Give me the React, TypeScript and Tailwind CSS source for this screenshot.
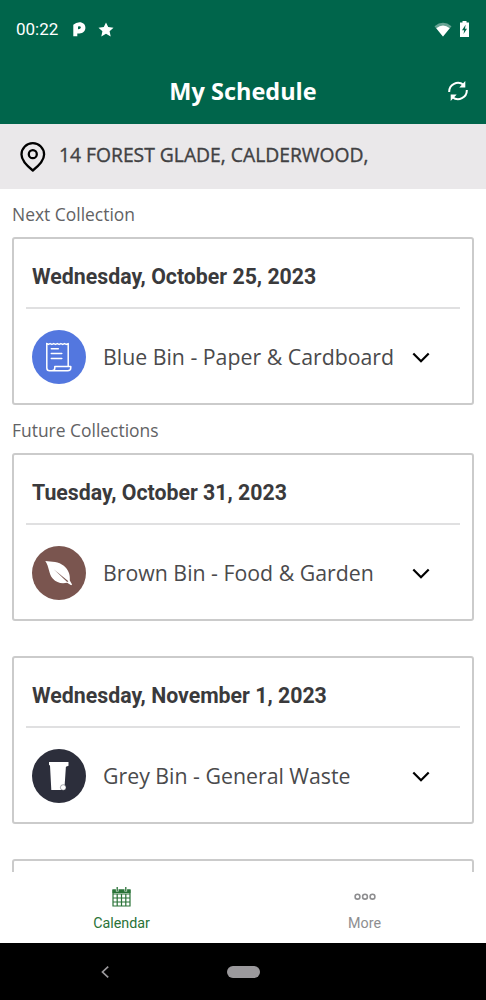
import React from 'react';

const openSans = "font-['Open_Sans','Noto_Sans',sans-serif]";
const roboto = "font-['Roboto',sans-serif]";

const PaperIcon: React.FC = () => (
  <svg className="size-[54px]" viewBox="0 0 54 54" fill="none" stroke="white" strokeWidth="1.500" strokeLinejoin="round" strokeLinecap="round">
    <path d="M14.800 13.600V38q0 2.800 2.800 2.800h18q3.200 0 3.200-3v-1.300H22.800V38q0 2.800-3 2.800" />
    <path d="M14.800 13.600l1.500.8 1.800-.8 1.800.8 1.800-.8 1.800.8 1.800-.8 1.800.8 1.800-.8 1.800.8 1.800-.8 1.800.8 1.900-.8v22.500" />
    <path d="M19.300 18.800h7M19.300 23.600h10.500M19.300 28.400h10.500" />
  </svg>
);

const LeafIcon: React.FC = () => (
  <svg className="size-[54px]" viewBox="0 0 54 54">
    <path d="M13.300 15c6.500.6 13.500.6 18.500 4.800 4.500 3.900 6.500 8.200 6 14.700l2.300 3.900-1 .9-3.900-2.500c-6 .9-10.500.2-14.500-4.300-4-4.600-3.400-11.500-7.400-17.500z" fill="white" />
    <path d="M22 23.500l13.200 12.500 1.200-.8z" fill="#7a554f" />
  </svg>
);

const BinIcon: React.FC = () => (
  <svg className="size-[54px]" viewBox="0 0 54 54">
    <path d="M17 13h19.500v3.800l-2.600.9-1.300 19.600v3.700H19.300L18 16.400l-1-.4z" fill="white" />
    <circle cx="31.200" cy="38.500" r="2.800" fill="white" stroke="#2c2e3b" strokeWidth=".4" />
  </svg>
);

const ChevronIcon: React.FC = () => (
  <svg className="size-5" viewBox="0 0 20 20" fill="none" stroke="black" strokeWidth="2.200">
    <path d="M2.300 6.500l7.700 7.700 7.700-7.700" />
  </svg>
);

const collections = [
  { date: 'Tuesday, October 31, 2023', name: 'Brown Bin - Food & Garden', color: 'bg-[#7a554f]', icon: <LeafIcon /> },
  { date: 'Wednesday, November 1, 2023', name: 'Grey Bin - General Waste', color: 'bg-[#2c2e3b]', icon: <BinIcon /> },
];

interface CardProps {
  date: string;
  name: string;
  color: string;
  icon: React.ReactNode;
}

const CollectionCard: React.FC<CardProps> = ({ date, name, color, icon }) => (
  <div className="mx-3 h-[168px] shrink-0 rounded-[3px] border-[2.500px] border-[#cbcbcb] bg-white px-3">
    <h2 className={`${roboto} flex h-[68px] items-center pt-[7px] pl-1.5 text-[21.300px] font-bold text-[#3a3a3c]`}>{date}</h2>
    <div className="h-[1.500px] bg-[#e0e0e1]" />
    <div className="flex h-[96px] items-center pl-1.5">
      <div className={`size-[54px] shrink-0 overflow-hidden rounded-full ${color}`}>{icon}</div>
      <span className={`${openSans} ml-[17px] w-[308px] text-[21.300px] whitespace-nowrap text-[#4a4a4c]`}>{name}</span>
      <ChevronIcon />
    </div>
  </div>
);

const SectionLabel: React.FC<{ children: React.ReactNode }> = ({ children }) => (
  <div className={`${openSans} flex h-12 shrink-0 items-center pt-0.5 pl-3 text-[17.450px] text-[#626264]`}>{children}</div>
);

const StatusBar: React.FC = () => (
  <div className="flex h-[59px] items-center px-4">
    <span className={`${roboto} pt-px text-[17px] text-white`}>00:22</span>
    <svg className="ml-[15px] h-[15px] w-[13px]" viewBox="0 0 13 15">
      <path d="M.3 2.800Q3 .3 6.500.3c3.600 0 5.900 2.300 5.900 5.400s-2.400 5.700-5.900 5.700H4.300v2.900H.3z" fill="white" />
      <path d="M5 4.500q2.800-1 2.800 1.100Q7.800 7.400 5 7.300z" fill="#00654b" />
    </svg>
    <svg className="ml-3 h-[15px] w-4" viewBox="0 0 16 15" fill="white">
      <path d="M8 .4l2.200 4.700 5.300.6-3.900 3.500 1.100 5.200L8 11.800l-4.700 2.600 1.100-5.200L.5 5.700l5.300-.6z" />
    </svg>
    <svg className="ml-auto h-[15px] w-[18px]" viewBox="0 0 18 15">
      <path d="M.5 4.200Q9-2.600 17.500 4.200L9 14.500z" fill="white" opacity=".4" />
      <path d="M2.300 6.300Q9 .8 15.700 6.300L9 14.500z" fill="white" />
    </svg>
    <svg className="mr-[1px] mb-px ml-2 h-4 w-[9px]" viewBox="0 0 9 16">
      <path d="M2.500 0h4v1.500H9V16H0V1.500h2.500z" fill="white" />
      <path d="M5.600 3.800L2 9.300h2.200L3.500 13 7 7.800H5z" fill="#00654b" />
    </svg>
  </div>
);

const App: React.FC = () => {
  return (
    <div className="flex h-[1000px] w-[486px] flex-col overflow-hidden bg-white">
      <header className="h-[124px] shrink-0 bg-[#00654b]">
        <StatusBar />
        <div className="grid h-[65px] grid-cols-[1fr_auto_1fr] items-center px-[18px]">
          <h1 className={`${openSans} col-start-2 text-[23.500px] font-bold text-white`}>My Schedule</h1>
          <svg className="mb-0.5 size-5 justify-self-end" viewBox="0 0 20 20" fill="none" stroke="white" strokeWidth="2">
            <path d="M1.200 11A8.800 8.800 0 0 1 15.500 3.800M18.800 9A8.800 8.800 0 0 1 4.500 16.200" />
            <path d="M17.300 0v6.500h-6zM2.700 20v-6.500h6z" fill="white" stroke="none" />
          </svg>
        </div>
      </header>

      <div className="flex h-[65px] shrink-0 items-center bg-[#eae8ea] pl-5">
        <svg className="h-[30px] w-[26px]" viewBox="0 0 26 30" fill="none" stroke="black" strokeWidth="2.300">
          <path d="M12.800 28.500C6.500 23.500 1.500 18.800 1.500 12.500a11.300 11.300 0 0 1 22.600 0c0 6.300-5 11-11.300 16z" strokeLinejoin="round" />
          <circle cx="12.800" cy="12.200" r="4" />
        </svg>
        <span className={`${openSans} ml-[13px] pb-0.5 text-[19.300px] text-[#414143] [-webkit-text-stroke:0.350px_#414143]`}>14 FOREST GLADE, CALDERWOOD,</span>
      </div>

      <main className="flex min-h-0 flex-1 flex-col overflow-hidden">
        <SectionLabel>Next Collection</SectionLabel>
        <CollectionCard date="Wednesday, October 25, 2023" name="Blue Bin - Paper & Cardboard" color="bg-[#5377df]" icon={<PaperIcon />} />
        <SectionLabel>Future Collections</SectionLabel>
        <div className="flex flex-col gap-[35px]">
          {collections.map((c) => (
            <CollectionCard key={c.date} {...c} />
          ))}
          <div className="mx-3 h-[168px] shrink-0 rounded-[3px] border-[2.500px] border-[#cbcbcb]" />
        </div>
      </main>

      <nav className={`${roboto} grid h-[71px] shrink-0 grid-cols-2 bg-white text-[14.300px]`}>
        <div className="flex flex-col items-center pt-[15px] text-[#2a7338]">
          <svg className="h-5 w-[19px]" viewBox="0 0 19 20" fill="none" stroke="currentColor">
            <path d="M1 3h17v16H1zM1 7h17M1 11h17M1 15h17M5.200 7v12M9.500 7v12M13.800 7v12" strokeWidth="1.200" />
            <path d="M.5 2.500h18V6H.5z" fill="currentColor" stroke="none" />
            <path d="M5.200 1v3.500M13.800 1v3.500" stroke="white" strokeWidth="2.600" />
            <path d="M5.200 0v4.300M13.800 0v4.300" strokeWidth="1.300" />
          </svg>
          <span className="mt-1.5">Calendar</span>
        </div>
        <div className="flex flex-col items-center pt-[15px] text-[#8e8e90]">
          <svg className="h-5 w-[22px]" viewBox="0 0 22 20" fill="none" stroke="currentColor" strokeWidth="1.600">
            <circle cx="3.500" cy="9.700" r="2.400" />
            <circle cx="11" cy="9.700" r="2.400" />
            <circle cx="18.500" cy="9.700" r="2.400" />
          </svg>
          <span className="mt-1.5">More</span>
        </div>
      </nav>

      <div className="grid h-[57px] shrink-0 grid-cols-[1fr_33px_1fr] items-center bg-black">
        <svg className="ml-[101px] h-3 w-2" viewBox="0 0 8 12" fill="none" stroke="#9b999c" strokeWidth="1.700">
          <path d="M7.200.7L1.500 6l5.700 5.300" />
        </svg>
        <div className="h-3 rounded-full bg-[#9b999c]" />
      </div>
    </div>
  );
};

export default App;
